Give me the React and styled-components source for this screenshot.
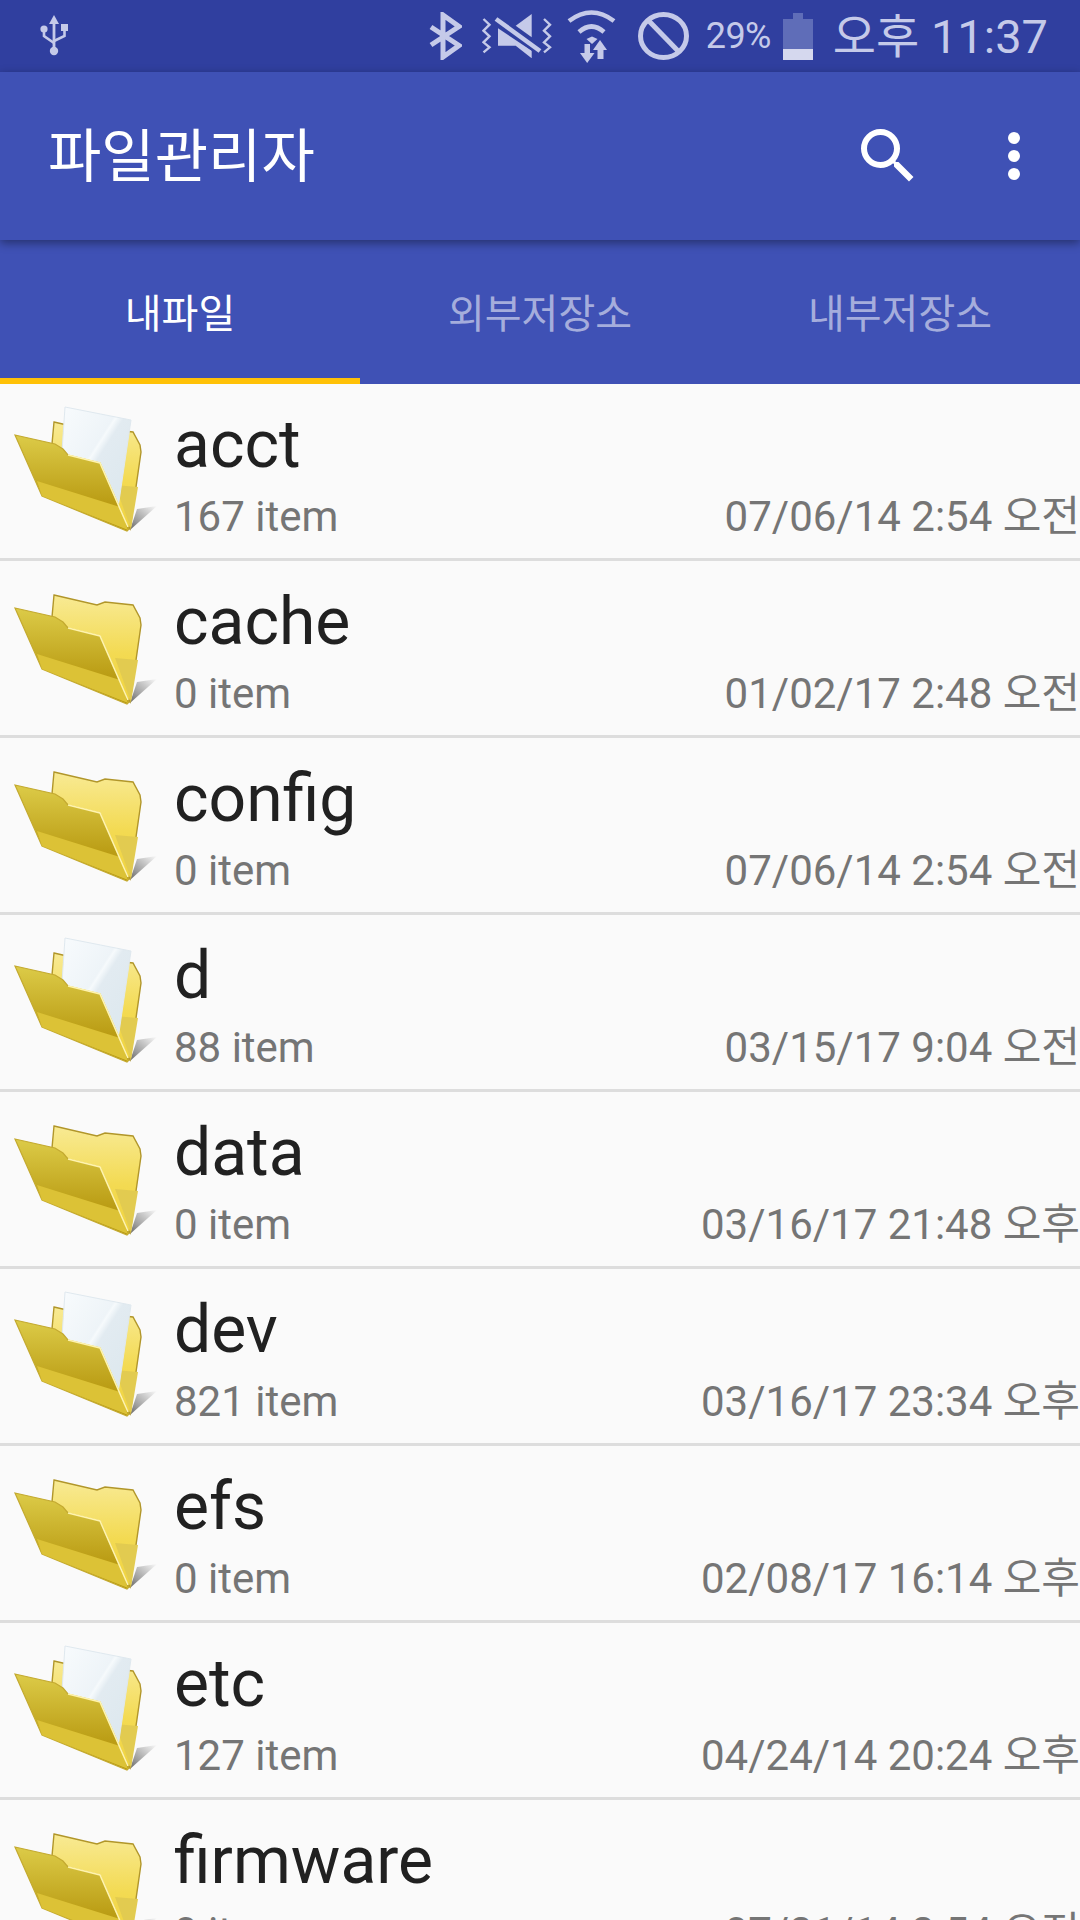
import React from 'react';
import styled, { createGlobalStyle } from 'styled-components';

const Global = createGlobalStyle`
  html, body { margin: 0; padding: 0; background: #fafafa; }
  * { box-sizing: border-box; }
`;
const SANS = `Roboto, "Noto Sans CJK KR", sans-serif`;

const Page = styled.div`
  width: 1080px; height: 1920px; overflow: hidden; background: #fafafa;
  font-family: ${SANS}; display: flex; flex-direction: column;
`;
const StatusBar = styled.div`
  height: 72px; flex: none; background: #303f9f; color: #c5cae9;
  display: flex; align-items: center; justify-content: space-between;
  padding: 0 32px 0 40px;
`;
const StatusGroup = styled.div`display: flex; align-items: center;`;
const StatusIcon = styled.svg`
  display: block; flex: none; margin-left: ${p => p.$gap || 0}px; fill: currentColor;
`;
const Percent = styled.span`font-size: 36px; letter-spacing: -0.6px; margin-left: 17px; line-height: 1;`;
const Clock = styled.span`font-size: 47px; margin-left: 20px; line-height: 1; white-space: nowrap;`;

const Toolbar = styled.header`
  height: 168px; flex: none; background: #3f51b5; color: #fff; position: relative; z-index: 2;
  display: flex; align-items: center; padding: 0 30px 0 48px;
  box-shadow: 0 3px 9px rgba(0, 0, 0, .4);
`;
const Title = styled.h1`
  flex: 1; margin: 0; padding-top: 2px; font-size: 58px; font-weight: 400; line-height: 1;
`;
const Actions = styled.div`display: flex; gap: 54px;`;
const ActionIcon = styled.svg`display: block; width: 72px; height: 72px; fill: #fff;`;

const Tabs = styled.nav`
  height: 144px; flex: none; background: #3f51b5; display: grid; grid-template-columns: repeat(3, 360px);
`;
const Tab = styled.div`
  display: flex; align-items: center; justify-content: center; font-size: 40px;
  color: ${p => (p.$active ? '#fff' : 'rgba(255,255,255,.55)')};
  border-bottom: 6px solid ${p => (p.$active ? '#ffc107' : 'transparent')};
  padding-top: 4px;
`;

const List = styled.main`flex: none;`;
const Row = styled.div`
  height: 177px; border-bottom: 3px solid #ddd; display: flex; align-items: flex-start;
  padding-top: 19px; background: #fafafa;
`;
const FolderBox = styled.svg`display: block; flex: none; width: 170px; height: 150px; margin-right: 4px;`;
const Info = styled.div`flex: 1; min-width: 0; padding-top: 6px;`;
const Name = styled.div`font-size: 66px; line-height: 72px; color: #212121;`;
const Meta = styled.div`
  display: flex; justify-content: space-between; align-items: baseline;
  font-size: 42px; line-height: 48px; color: #757575; white-space: nowrap; margin-top: 12px;
`;
const Stamp = styled.span`flex: none;`;

const Folder = ({ paper }) => {
  const k = paper ? 'P' : 'E';
  return (
    <FolderBox viewBox="0 0 170 150" aria-hidden="true">
      <defs>
        <linearGradient id={`bk${k}`} x1="0" y1="0" x2="0" y2="1">
          <stop offset="0" stopColor="#f8ea94" />
          <stop offset=".55" stopColor="#f3da52" />
          <stop offset="1" stopColor="#f0d440" />
        </linearGradient>
        <linearGradient id={`fr${k}`} x1="0" y1="0" x2="0" y2="1">
          <stop offset="0" stopColor="#dccb48" />
          <stop offset=".7" stopColor="#bb9d15" />
          <stop offset="1" stopColor="#b3950f" />
        </linearGradient>
        <linearGradient id={`sh${k}`} x1="1" y1="0" x2="0" y2="1">
          <stop offset="0" stopColor="#fafafa" />
          <stop offset=".7" stopColor="#9a9a9a" />
          <stop offset="1" stopColor="#666" />
        </linearGradient>
        <linearGradient id={`pp${k}`} x1="0" y1="0" x2="1" y2="1">
          <stop offset="0" stopColor="#f8fbfd" />
          <stop offset=".42" stopColor="#eef4f8" />
          <stop offset=".44" stopColor="#f6fafc" />
          <stop offset=".5" stopColor="#e2ebf1" />
          <stop offset="1" stopColor="#dbe7ed" />
        </linearGradient>
      </defs>
      <g transform={paper ? 'translate(0 4)' : undefined} style={{ filter: 'blur(.6px)' }}>
        <polygon points="137,102 157,99 130,123" fill={`url(#sh${k})`} />
        <path
          d="M54 15 L97 25 L105 22 L133 25 L140 38 L141 45 L130 122 L68 48 L52 37 Z"
          fill={`url(#bk${k})`}
          stroke="#b1962a"
          strokeWidth="1.4"
        />
        <polygon points="115,78 138,80 131,122" fill="#e2cb50" />
        {paper && (
          <path d="M65 0 L131 13 L117 108 L62 44 Z" fill={`url(#pp${k})`} stroke="#dfe8ee" strokeWidth="1" />
        )}
        <path
          d="M15 28 L55 37 L63 42 L68 48 L100 56 L129 122 L127 124 L42 89 Z"
          fill={`url(#fr${k})`}
          stroke="#c4aa30"
          strokeWidth="1.2"
        />
        <polygon points="37,74 120,100 128,123 42,89" fill="#dcc236" />
        <path d="M68 48 L100 56 L128 120" fill="none" stroke="#fff4ae" strokeWidth="1.6" />
      </g>
    </FolderBox>
  );
};

const Usb = () => (
  <StatusIcon width="28" height="43" viewBox="0 0 28 43">
    <polygon points="14,0 9,9 19,9" />
    <rect x="12.6" y="8" width="2.8" height="28" />
    <circle cx="14" cy="36" r="4.2" />
    <circle cx="4" cy="14" r="3.6" />
    <rect x="21" y="9" width="7" height="7" />
    <path d="M4 14 V21 L14 28 M24.5 15 V21 L14 26" fill="none" stroke="currentColor" strokeWidth="2.6" />
  </StatusIcon>
);
const Bluetooth = () => (
  <StatusIcon width="33" height="48" viewBox="0 0 33 48">
    <path d="M2 15 L30 33.5 L14 45 V3 L30 14.5 L2 33" fill="none" stroke="currentColor" strokeWidth="5" />
  </StatusIcon>
);
const Mute = () => (
  <StatusIcon $gap={20} width="70" height="44" viewBox="0 0 70 44">
    <path d="M1.5 5 L7.5 10.7 L1.5 16.7 L7.5 22.3 L1.5 28.3 L7.5 33.3 L1.5 38.3" fill="none" stroke="currentColor" strokeWidth="2.4" />
    <path d="M62 5 L68 10.7 L62 16.7 L68 22.3 L62 28.3 L68 33.3 L62 38.3" fill="none" stroke="currentColor" strokeWidth="2.4" />
    <polygon points="33.7,11.7 49.7,0 49.7,23.3" />
    <polygon points="16,14.3 16,31.7 33.7,31.7 49.7,44.3 49.7,36.7" />
    <line x1="14" y1="5" x2="58" y2="37" stroke="#303f9f" strokeWidth="9" />
    <line x1="14" y1="5" x2="58" y2="37" stroke="currentColor" strokeWidth="4.6" />
  </StatusIcon>
);
const Wifi = () => (
  <StatusIcon $gap={15} width="49" height="53" viewBox="0 0 49 53">
    <path d="M2 11 Q24.5 -6 47 11" fill="none" stroke="currentColor" strokeWidth="4.6" />
    <path d="M12 22 Q24.5 11 37 22" fill="none" stroke="currentColor" strokeWidth="4.6" />
    <polygon points="19.5,29 25,26.5 30.5,29 25,34" />
    <rect x="17.5" y="34" width="5.5" height="11" />
    <polygon points="13,43 27.5,43 20.2,53" />
    <rect x="30.5" y="39" width="6" height="10" />
    <polygon points="26,40 40,40 33,30" />
  </StatusIcon>
);
const Block = () => (
  <StatusIcon $gap={22} width="51" height="48" viewBox="0 0 51 48">
    <ellipse cx="25.5" cy="24" rx="23" ry="21.5" fill="none" stroke="currentColor" strokeWidth="5" />
    <line x1="10" y1="8" x2="41" y2="40" stroke="currentColor" strokeWidth="5" />
  </StatusIcon>
);
const Battery = () => (
  <StatusIcon $gap={12} width="30" height="47" viewBox="0 0 30 47">
    <rect x="10" y="0" width="10" height="6" fill="#5f6db8" />
    <rect x="0" y="6" width="30" height="30" fill="#5f6db8" />
    <rect x="0" y="36" width="30" height="11" fill="#d5d8ee" />
  </StatusIcon>
);

const ROWS = [
  ['acct', 167, '07/06/14 2:54 오전'],
  ['cache', 0, '01/02/17 2:48 오전'],
  ['config', 0, '07/06/14 2:54 오전'],
  ['d', 88, '03/15/17 9:04 오전'],
  ['data', 0, '03/16/17 21:48 오후'],
  ['dev', 821, '03/16/17 23:34 오후'],
  ['efs', 0, '02/08/17 16:14 오후'],
  ['etc', 127, '04/24/14 20:24 오후'],
  ['firmware', 0, '07/21/14 2:54 오전'],
];

export default function App() {
  return (
    <Page>
      <Global />
      <StatusBar>
        <Usb />
        <StatusGroup>
          <Bluetooth />
          <Mute />
          <Wifi />
          <Block />
          <Percent>29%</Percent>
          <Battery />
          <Clock>오후 11:37</Clock>
        </StatusGroup>
      </StatusBar>
      <Toolbar>
        <Title>파일관리자</Title>
        <Actions>
          <ActionIcon viewBox="0 0 24 24">
            <path d="M15.5 14h-.79l-.28-.27A6.47 6.47 0 0 0 16 9.5 6.5 6.5 0 1 0 9.5 16c1.61 0 3.09-.59 4.23-1.57l.27.28v.79l5 4.99L20.49 19l-4.99-5zm-6 0C7.01 14 5 11.99 5 9.5S7.01 5 9.5 5 14 7.01 14 9.5 11.99 14 9.5 14z" />
          </ActionIcon>
          <ActionIcon viewBox="0 0 24 24">
            <circle cx="12" cy="6" r="2" />
            <circle cx="12" cy="12" r="2" />
            <circle cx="12" cy="18" r="2" />
          </ActionIcon>
        </Actions>
      </Toolbar>
      <Tabs>
        <Tab $active>내파일</Tab>
        <Tab>외부저장소</Tab>
        <Tab>내부저장소</Tab>
      </Tabs>
      <List>
        {ROWS.map(([name, n, date]) => (
          <Row key={name}>
            <Folder paper={n > 0} />
            <Info>
              <Name>{name}</Name>
              <Meta>
                <span>{n} item</span>
                <Stamp>{date}</Stamp>
              </Meta>
            </Info>
          </Row>
        ))}
      </List>
    </Page>
  );
}
